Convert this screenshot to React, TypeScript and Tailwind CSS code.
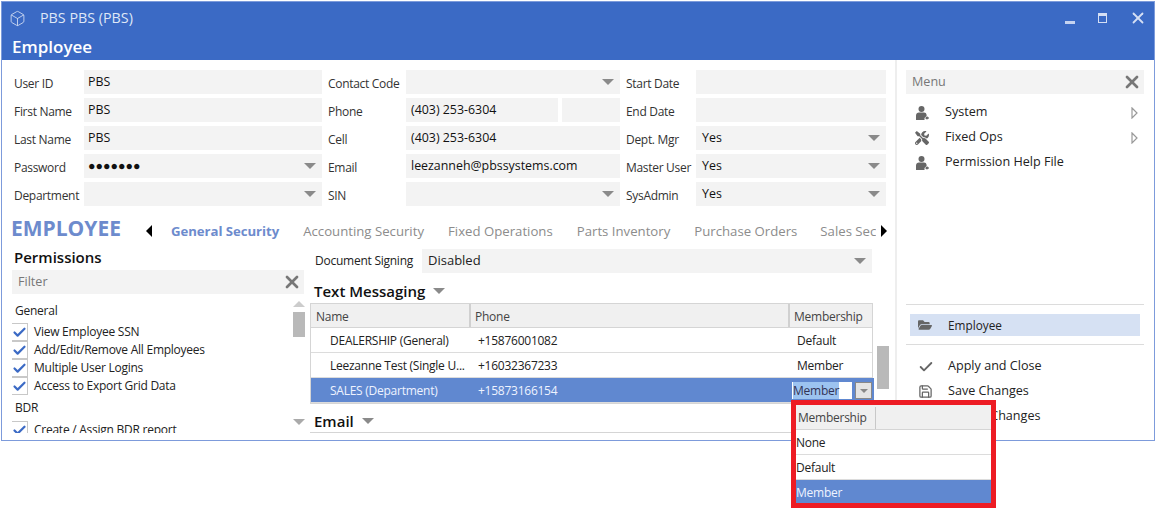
import { Box, Check, Save, X } from "lucide-react";
import { FaFolderOpen, FaTools } from "react-icons/fa";

const Caret = ({ className = "" }: { className?: string }) => (
  <span className={`h-0 w-0 border-x-[6px] border-t-[6px] border-x-transparent border-t-[#8a8a8a] ${className}`} />
);

const UserIcon = () => (
  <svg width="15" height="14" viewBox="0 0 15 14" fill="currentColor">
    <circle cx="6.5" cy="3" r="3" />
    <path d="M1 14V9.5C1 7.5 2.3 6.5 4 6.5H9C10.4 6.5 11.5 7.3 11.6 9V10L9.5 12V14Z" />
    <path d="M12.3 10.2l.6 1 1.1.2v1l-1.1.3-.6.9-1-.4-.9-.8.3-1.1z" />
  </svg>
);

function Field({ value, caret, pad = "pl-1", className = "" }: { value?: string; caret?: boolean; pad?: string; className?: string }) {
  return (
    <div className={`flex h-6 items-center justify-between bg-[#f3f3f3] pr-1.5 text-[12.4px] text-[#111] ${pad} ${className}`}>
      <span>{value}</span>
      {caret && <Caret />}
    </div>
  );
}

const Label = ({ children }: { children: string }) => (
  <div className="flex h-6 items-center whitespace-nowrap pt-[3px] text-[12px] tracking-[-0.3px] text-[#333]">{children}</div>
);

const permissions = ["View Employee SSN", "Add/Edit/Remove All Employees", "Multiple User Logins", "Access to Export Grid Data"];
const tabs = ["Accounting Security", "Fixed Operations", "Parts Inventory", "Purchase Orders"];

function Permission({ label }: { label: string }) {
  return (
    <div className="flex h-[18px] items-center gap-[6px]">
      <span className="flex h-[18px] w-[18px] shrink-0 items-center justify-center border border-[#c8c8c8] bg-white text-[#3b6ac5]">
        <Check size={15} strokeWidth={3.5} />
      </span>
      <span className="text-[#222]">{label}</span>
    </div>
  );
}

function Row({ name, phone, member, selected }: { name: string; phone: string; member?: string; selected?: boolean }) {
  return (
    <div className={`flex h-[25px] items-center border-b border-[#dcdcdc] pt-0.5 ${selected ? "bg-[#6088d0] text-[#eef3ff]" : "bg-white text-[#222]"}`}>
      <span className="w-[160px] whitespace-nowrap pl-[19px]">{name}</span>
      <span className="w-[319px] pl-[7px]">{phone}</span>
      <span className="pl-[7px]">{member}</span>
    </div>
  );
}

function MenuItem({ icon, label, arrow }: { icon: React.ReactNode; label: string; arrow?: boolean }) {
  return (
    <div className="flex h-[25px] items-center text-[12.6px] text-[#222]">
      <span className="flex w-[39px] justify-start pl-[9px] text-[#666]">{icon}</span>
      <span className="flex-1">{label}</span>
      {arrow && (
        <svg width="7" height="12" viewBox="0 0 7 12" className="mr-[6px]">
          <path d="M1 1L6 6L1 11Z" fill="none" stroke="#999" strokeWidth="1.2" />
        </svg>
      )}
    </div>
  );
}

export default function App() {
  return (
    <div className="h-[508px] w-[1158px] overflow-hidden bg-white pl-px pt-px text-[12px] font-['Open_Sans',sans-serif]">
      <div className="relative h-[440px] w-[1154px] border border-[#7d9bdb] bg-white">
        <div className="h-[58px] bg-[#3b6ac5] text-white">
          <div className="flex h-[32px] items-center pl-[7px] pr-[7px]">
            <Box size={17} strokeWidth={1.3} className="text-[#c9d6f0]" />
            <span className="ml-[14px] text-[14.3px] text-[#dfe7f7]">PBS PBS (PBS)</span>
            <div className="ml-auto flex items-center text-[#d5dff4]">
              <span className="mr-[23px] mt-2 h-[3px] w-[10px] bg-[#c5d3f0]" />
              <span className="mr-[22px] h-[10px] w-[9px] border border-t-[3px] border-[#d5dff4]" />
              <X size={18} strokeWidth={2.4} />
            </div>
          </div>
          <div className="mt-[2px] pl-[10px] text-[17px] leading-[22px] font-semibold">Employee</div>
        </div>

        <div className="flex h-[380px]">
          <div className="w-[893px] shrink-0 overflow-hidden">
            <div className="ml-[12px] mt-[10px] grid grid-cols-[70px_238px_6px_78px_214px_6px_70px_190px] gap-y-1">
              <Label>User ID</Label><Field value="PBS" /><span /><Label>Contact Code</Label><Field caret /><span /><Label>Start Date</Label><Field />
              <Label>First Name</Label><Field value="PBS" /><span /><Label>Phone</Label>
              <div className="flex gap-1"><Field value="(403) 253-6304" pad="pl-[5px]" className="w-[152px]" /><Field className="flex-1" /></div>
              <span /><Label>End Date</Label><Field />
              <Label>Last Name</Label><Field value="PBS" /><span /><Label>Cell</Label><Field value="(403) 253-6304" pad="pl-[5px]" /><span /><Label>Dept. Mgr</Label><Field value="Yes" pad="pl-[6px]" caret />
              <Label>Password</Label><Field value="●●●●●●●" caret /><span /><Label>Email</Label><Field value="leezanneh@pbssystems.com" pad="pl-[5px]" /><span /><Label>Master User</Label><Field value="Yes" pad="pl-[6px]" caret />
              <Label>Department</Label><Field caret /><span /><Label>SIN</Label><Field caret /><span /><Label>SysAdmin</Label><Field value="Yes" pad="pl-[6px]" caret />
            </div>

            <div className="mt-[8px] flex h-[30px] items-center whitespace-nowrap pl-[9px]">
              <span className="w-[135px] text-[21px] font-bold text-[#6d8bcd]">EMPLOYEE</span>
              <span className="mt-[4px] h-0 w-0 border-y-[6px] border-r-[6px] border-y-transparent border-r-black" />
              <span className="ml-[19px] mt-[5px] text-[13.2px] font-bold tracking-[-0.05px] text-[#6d8bcd]">General Security</span>
              {tabs.map((t) => (
                <span key={t} className="ml-[24px] mt-[5px] text-[13.2px] text-[#8c8c8c]">{t}</span>
              ))}
              <span className="ml-[23px] mt-[5px] w-[56px] overflow-hidden text-[13.2px] text-[#8c8c8c]">Sales Sec</span>
              <span className="ml-[5px] mt-[4px] h-0 w-0 border-y-[6px] border-l-[6px] border-y-transparent border-l-black" />
            </div>

            <div className="flex">
              <div className="w-[308px] shrink-0 pl-[10px]">
                <div className="mt-[2px] pl-[2px] text-[15px] leading-[22px] font-semibold text-[#111]">Permissions</div>
                <div className="mt-[2px] flex h-6 w-[292px] items-center justify-between bg-[#f3f3f3] pl-[6px] pr-[2px] text-[12.6px] text-[#777]">
                  Filter <X size={20} strokeWidth={3.2} className="text-[#777]" />
                </div>
                <div className="relative h-[139px] overflow-hidden tracking-[-0.25px]">
                  <div className="pl-[3px] pt-[8px]">
                    <div className="mb-[3px] leading-[18px] text-[#222]">General</div>
                    <div className="-ml-[5px]">
                      {permissions.map((p) => <Permission key={p} label={p} />)}
                    </div>
                    <div className="mb-[4px] mt-[4px] leading-[18px] text-[#222]">BDR</div>
                    <div className="-ml-[5px]"><Permission label="Create / Assign BDR report" /></div>
                  </div>
                  <div className="absolute left-[281px] top-[7px] flex h-[124px] w-[12px] flex-col items-center">
                    <span className="h-0 w-0 border-x-[6px] border-b-[6px] border-x-transparent border-b-[#ccc]" />
                    <span className="mt-[5px] h-[25px] w-[12px] bg-[#b9b9b9]" />
                    <Caret className="mt-auto border-t-[#aaa]" />
                  </div>
                </div>
              </div>

              <div className="relative w-[563px] shrink-0 pt-[5px]">
                <div className="flex h-6 items-center pr-px">
                  <span className="w-[112px] whitespace-nowrap pl-[5px] tracking-[-0.25px] text-[#222]">Document Signing</span>
                  <div className="flex h-6 flex-1 items-center justify-between bg-[#f3f3f3] px-[6px] text-[13px] text-[#222]">
                    Disabled <Caret />
                  </div>
                </div>
                <div className="mt-[6px] flex h-[24px] items-center gap-[8px] pl-[4px] text-[15px] font-semibold text-[#111]">
                  Text Messaging <Caret />
                </div>
                <div className="border border-[#d5d5d5] tracking-[-0.25px]">
                  <div className="flex h-[24px] items-center border-b border-[#d5d5d5] bg-[#f0f0f0] text-[#444]">
                    <span className="flex h-full w-[160px] items-center border-r-2 border-[#d0d0d0] pl-[5px] pt-[3px]">Name</span>
                    <span className="flex h-full w-[319px] items-center border-r-2 border-[#d0d0d0] pl-[4px] pt-[3px]">Phone</span>
                    <span className="pl-[4px] pt-[3px]">Membership</span>
                  </div>
                  <Row name="DEALERSHIP (General)" phone="+15876001082" member="Default" />
                  <Row name="Leezanne Test (Single U..." phone="+16032367233" member="Member" />
                  <Row name="SALES (Department)" phone="+15873166154" selected />
                </div>
                <div className="mt-[6px] flex h-[22px] items-center gap-[8px] pl-[4px] text-[15px] font-semibold text-[#111]">
                  Email <Caret />
                </div>
                <div className="border-t border-[#d5d5d5]" />
                <span className="absolute left-[567px] top-[102px] h-[43px] w-[12px] bg-[#b9b9b9]" />
              </div>
            </div>
          </div>

          <div className="h-full w-[259px] border-l-2 border-[#eeeeee] pl-[9px] pr-[10px] pt-[10px]">
            <div className="flex h-6 items-center justify-between bg-[#f3f3f3] pl-[6px] pr-[2px] text-[12.6px] text-[#777]">
              Menu <X size={20} strokeWidth={3.2} />
            </div>
            <div className="mt-[6px]">
              <MenuItem icon={<UserIcon />} label="System" arrow />
              <MenuItem icon={<FaTools size={14} />} label="Fixed Ops" arrow />
              <MenuItem icon={<UserIcon />} label="Permission Help File" />
            </div>
            <div className="mt-[129px] border-t border-[#dcdcdc]" />
            <div className="mx-[4px] mb-[8px] mt-[9px] flex h-[22px] items-center bg-[#d6e1f3] pl-[8px] text-[11.8px] text-[#222]">
              <FaFolderOpen size={14} className="text-[#666]" />
              <span className="ml-[16px] pt-0.5">Employee</span>
            </div>
            <div className="border-t border-[#dcdcdc]" />
            <div className="mt-[9px] pl-[3px]">
              <MenuItem icon={<Check size={16} strokeWidth={2.8} />} label="Apply and Close" />
              <MenuItem icon={<Save size={15} strokeWidth={2} />} label="Save Changes" />
              <MenuItem icon={<span />} label="Cancel Changes" />
            </div>
          </div>
        </div>

        <div className="absolute left-[790px] top-[376px] flex h-[25px] w-[82px] items-center bg-[#6088d0] tracking-[-0.25px]">
          <span className="flex h-[17px] w-[60px] items-center bg-white pl-px">
            <span className="bg-[#9cc3f0] leading-[17px] text-[#335]">Member</span>
          </span>
          <span className="ml-[3px] flex h-[17px] w-[17px] items-center justify-center border border-[#888] bg-[#e4e4e4]">
            <span className="h-0 w-0 border-x-[4px] border-t-[4px] border-x-transparent border-t-[#888]" />
          </span>
        </div>
      </div>

      <div className="absolute left-[791px] top-[400px] w-[205px] border-[5px] border-[#ed1c24] bg-white tracking-[-0.25px] text-[#222]">
        <div className="flex h-[25px] items-center border-b border-[#d5d5d5] bg-[#f0f0f0] pt-0.5 text-[#444]">
          <span className="flex h-full w-[80px] items-center border-r border-[#c8c8c8] pl-[2px]">Membership</span>
        </div>
        <div className="flex h-[25px] items-center border-b border-[#dcdcdc] pt-0.5">None</div>
        <div className="flex h-[25px] items-center border-b border-[#dcdcdc] pt-0.5">Default</div>
        <div className="flex h-[23px] items-center bg-[#6088d0] pt-0.5 text-[#eef3ff]">Member</div>
      </div>
    </div>
  );
}
